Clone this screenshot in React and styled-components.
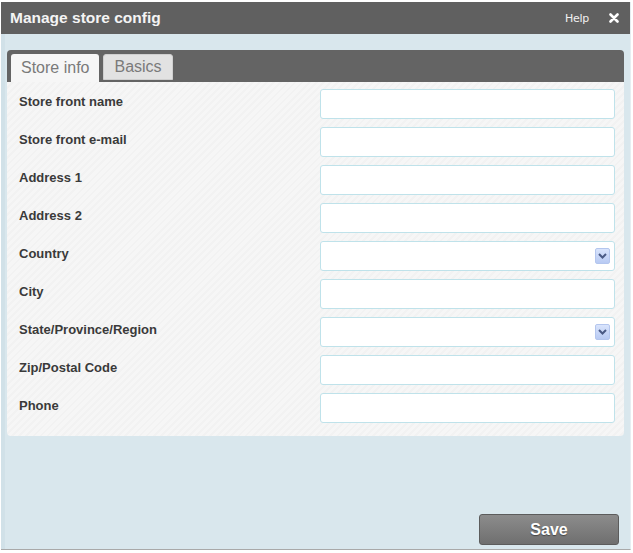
import React from 'react'
import styled, { createGlobalStyle } from 'styled-components'

const GlobalStyle = createGlobalStyle`
  html, body {
    margin: 0;
    padding: 0;
    background: #ffffff;
    font-family: "Liberation Sans", Arial, sans-serif;
  }
`

const fields = [
  { label: 'Store front name' },
  { label: 'Store front e-mail' },
  { label: 'Address 1' },
  { label: 'Address 2' },
  { label: 'Country', select: true },
  { label: 'City' },
  { label: 'State/Province/Region', select: true },
  { label: 'Zip/Postal Code' },
  { label: 'Phone' },
]

const Window = styled.div`
  margin: 2px 2px 0 1px;
  width: 630px;
  height: 548px;
  display: flex;
  flex-direction: column;
  background: #d9e7ed;
  border-right: 1px solid #e6eef2;
  border-bottom: 1px solid #a9a9a9;
  box-sizing: border-box;
`

const TitleBar = styled.div`
  height: 32px;
  flex-shrink: 0;
  background: #606060;
  display: flex;
  align-items: center;
  padding: 0 11px 0 9px;
  color: #fff;

  h1 {
    margin: 0;
    flex: 1;
    font-size: 15.5px;
    font-weight: bold;
    color: #f4f4f4;
  }
`

const HelpLink = styled.span`
  font-family: "DejaVu Sans", sans-serif;
  font-size: 11px;
  color: #f0f0f0;
  margin-right: 20px;
  letter-spacing: -0.3px;
`

const Body = styled.div`
  flex: 1;
  display: flex;
  flex-direction: column;
  padding: 16px 6px 4px 6px;
  border-left: 4px solid #d1e1e8;
  box-sizing: border-box;
`

const Panel = styled.div`
  margin-left: -4px;
  border-radius: 4px;
  overflow: hidden;
`

const TabBar = styled.div`
  height: 32px;
  background: #646464;
  display: flex;
  align-items: flex-end;
  gap: 4px;
  padding-left: 4px;
  box-sizing: border-box;
`

const Tab = styled.div`
  height: ${p => (p.$active ? '28px' : '26px')};
  margin-bottom: ${p => (p.$active ? '0' : '2px')};
  padding: 0 10px;
  display: flex;
  align-items: center;
  font-size: 16px;
  color: #7a7a7a;
  background: ${p => (p.$active ? '#f6f6f6' : '#e2e2e2')};
  border: ${p => (p.$active ? 'none' : '1px solid #cfcfcf')};
  border-radius: 3px 3px 0 0;
  box-sizing: border-box;
`

const Content = styled.div`
  padding: 7px 9px 13px 12px;
  background: repeating-linear-gradient(
    135deg,
    #f6f6f6 0,
    #f6f6f6 3px,
    #f2f2f2 3px,
    #f2f2f2 5px
  );
  display: flex;
  flex-direction: column;
  gap: 8px;
`

const Row = styled.div`
  display: flex;
  align-items: flex-start;
  height: 30px;
`

const Label = styled.label`
  flex: 1;
  margin-top: 5px;
  line-height: 16px;
  font-size: 13px;
  font-weight: bold;
  color: #3a3a3a;
`

const Field = styled.div`
  width: 295px;
  height: 30px;
  background: #fff;
  border: 1px solid #bfe2ea;
  border-radius: 3px;
  box-sizing: border-box;
  display: flex;
  align-items: center;
  justify-content: flex-end;
  padding-right: 4px;
`

const Arrow = styled.div`
  width: 15px;
  height: 16px;
  background: linear-gradient(#d9e4fc, #b8caf3);
  border: 1px solid #b4c6ee;
  border-radius: 2px;
  box-sizing: border-box;
  display: flex;
  align-items: center;
  justify-content: center;
`

const Footer = styled.div`
  margin-top: auto;
  display: flex;
  justify-content: flex-end;
  padding-right: 5px;
`

const SaveButton = styled.button`
  width: 140px;
  height: 31px;
  border: 1px solid #5c5c5c;
  border-radius: 3px;
  background: linear-gradient(#8c8c8c, #6f6f6f);
  color: #fff;
  font-family: "Liberation Sans", Arial, sans-serif;
  font-size: 16px;
  font-weight: bold;
  text-shadow: 0 1px 1px #444;
`

export default function App() {
  return (
    <>
      <GlobalStyle />
      <Window>
        <TitleBar>
          <h1>Manage store config</h1>
          <HelpLink>Help</HelpLink>
          <svg width="10" height="10" viewBox="0 0 10 10">
            <path d="M1.5 1.5 L8.5 8.5 M8.5 1.5 L1.5 8.5" stroke="#fff" strokeWidth="2.6" strokeLinecap="round" />
          </svg>
        </TitleBar>
        <Body>
          <Panel>
            <TabBar>
              <Tab $active>Store info</Tab>
              <Tab>Basics</Tab>
            </TabBar>
            <Content>
              {fields.map(f => (
                <Row key={f.label}>
                  <Label>{f.label}</Label>
                  <Field>
                    {f.select && (
                      <Arrow>
                        <svg width="9" height="6" viewBox="0 0 9 6">
                          <path d="M1 1 L4.5 4.5 L8 1" fill="none" stroke="#4a5a85" strokeWidth="2" />
                        </svg>
                      </Arrow>
                    )}
                  </Field>
                </Row>
              ))}
            </Content>
          </Panel>
          <Footer>
            <SaveButton>Save</SaveButton>
          </Footer>
        </Body>
      </Window>
    </>
  )
}
